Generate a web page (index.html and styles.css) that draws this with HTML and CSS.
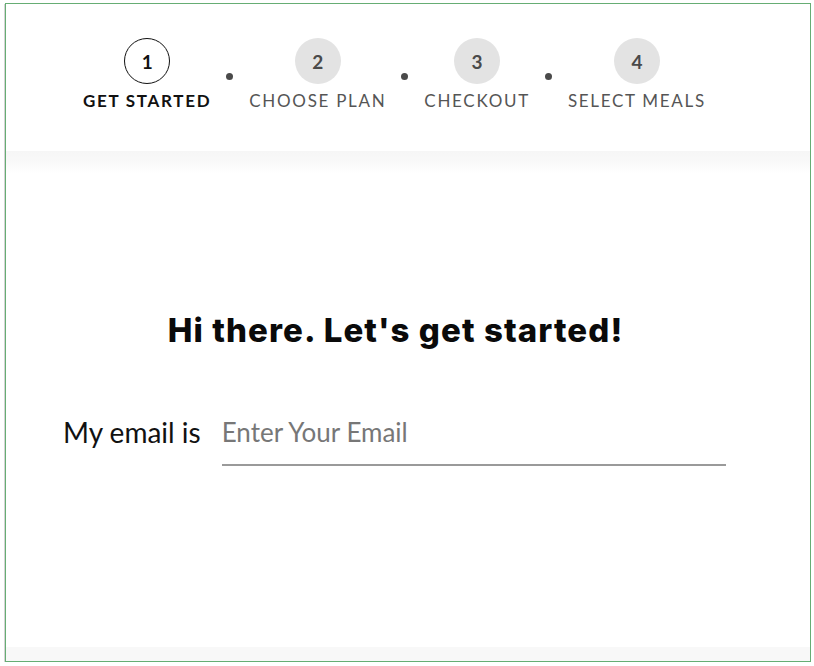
FILE: index.html
```html
<!DOCTYPE html>
<html lang="en">
<head>
<meta charset="utf-8">
<title>Get Started</title>
<link rel="stylesheet" href="styles.css">
</head>
<body>
<div class="frame">
  <header class="steps">
    <div class="step active">
      <div class="num">1</div>
      <div class="label">GET STARTED</div>
    </div>
    <span class="dot"></span>
    <div class="step">
      <div class="num">2</div>
      <div class="label">CHOOSE PLAN</div>
    </div>
    <span class="dot"></span>
    <div class="step">
      <div class="num">3</div>
      <div class="label">CHECKOUT</div>
    </div>
    <span class="dot"></span>
    <div class="step">
      <div class="num">4</div>
      <div class="label">SELECT MEALS</div>
    </div>
  </header>
  <div class="band"></div>
  <main class="content">
    <h1 class="title">Hi there. Let's get started!</h1>
    <div class="email-row">
      <span class="email-label">My email is</span>
      <input class="email-input" type="email" placeholder="Enter Your Email">
    </div>
  </main>
  <div class="footer-band"></div>
</div>
</body>
</html>
```
FILE: styles.css
```css
html, body {
  margin: 0;
  padding: 0;
  background: #ffffff;
}

body {
  font-family: "Lato", "Liberation Sans", sans-serif;
  color: #111;
}

.frame {
  box-sizing: border-box;
  width: 806px;
  height: 659px;
  margin: 3px 0 0 5px;
  border: 1px solid #66ad74;
  box-shadow: -1px 1px 0 #d4d4d4;
  display: flex;
  flex-direction: column;
  background: #fff;
}

.steps {
  height: 147px;
  display: flex;
  align-items: flex-start;
  padding: 34px 0 0 77px;
  box-sizing: border-box;
}

.step {
  display: flex;
  flex-direction: column;
  align-items: center;
}

.num {
  box-sizing: border-box;
  width: 46px;
  height: 46px;
  border-radius: 50%;
  background: #e3e3e3;
  color: #4a4a4a;
  font-size: 19px;
  font-weight: 700;
  display: flex;
  align-items: center;
  justify-content: center;
}

.active .num {
  background: #fff;
  border: 1.5px solid #111;
  color: #111;
}

.label {
  margin-top: 6px;
  font-size: 17px;
  letter-spacing: 1.7px;
  color: #555;
  white-space: nowrap;
}

.active .label {
  color: #111;
  font-weight: 700;
}

.dot {
  width: 7px;
  height: 7px;
  border-radius: 50%;
  background: #4a4a4a;
  margin: 35px 16px 0 15px;
}

.band {
  height: 22px;
  background: linear-gradient(#f6f6f6, #f9f9f9 50%, #ffffff);
}

.content {
  flex: 1;
  display: flex;
  flex-direction: column;
  align-items: flex-start;
}

.title {
  align-self: center;
  margin: 137px 0 0 -25px;
  font-family: "Inter", "Lato", sans-serif;
  font-weight: 800;
  font-size: 33px;
  line-height: 40px;
  color: #0a0a0a;
  letter-spacing: 1.1px;
}

.email-row {
  display: flex;
  align-items: flex-start;
  margin: 66px 0 0 57px;
}

.email-label {
  font-size: 28px;
  color: #111;
  line-height: 32px;
}

.email-input {
  margin-left: 21px;
  width: 504px;
  height: 50px;
  box-sizing: border-box;
  border: none;
  border-bottom: 2px solid #9a9a9a;
  outline: none;
  font-family: "Lato", "Liberation Sans", sans-serif;
  font-size: 26px;
  line-height: 32px;
  padding: 0 0 16px 0;
  background: transparent;
}

.email-input::placeholder {
  color: #777;
}

.footer-band {
  height: 14px;
  background: #f8f8f8;
}
```
